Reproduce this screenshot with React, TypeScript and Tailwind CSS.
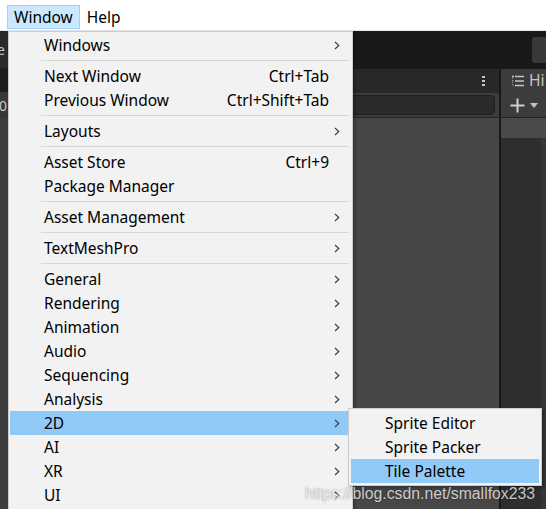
import React from "react";

type Item =
  | { kind: "sep" }
  | { kind: "item"; label: string; shortcut?: string; sub?: boolean; active?: boolean };

const sep: Item = { kind: "sep" };

const items: Item[] = [
  { kind: "item", label: "Windows", sub: true },
  sep,
  { kind: "item", label: "Next Window", shortcut: "Ctrl+Tab" },
  { kind: "item", label: "Previous Window", shortcut: "Ctrl+Shift+Tab" },
  sep,
  { kind: "item", label: "Layouts", sub: true },
  sep,
  { kind: "item", label: "Asset Store", shortcut: "Ctrl+9" },
  { kind: "item", label: "Package Manager" },
  sep,
  { kind: "item", label: "Asset Management", sub: true },
  sep,
  { kind: "item", label: "TextMeshPro", sub: true },
  sep,
  { kind: "item", label: "General", sub: true },
  { kind: "item", label: "Rendering", sub: true },
  { kind: "item", label: "Animation", sub: true },
  { kind: "item", label: "Audio", sub: true },
  { kind: "item", label: "Sequencing", sub: true },
  { kind: "item", label: "Analysis", sub: true },
  { kind: "item", label: "2D", sub: true, active: true },
  { kind: "item", label: "AI", sub: true },
  { kind: "item", label: "XR", sub: true },
  { kind: "item", label: "UI", sub: true },
];

const subItems = [
  { label: "Sprite Editor" },
  { label: "Sprite Packer" },
  { label: "Tile Palette", active: true },
];

function Chevron() {
  return (
    <svg width="6" height="9" viewBox="0 0 6 9" className="ml-[5px] -mt-[2px]">
      <path d="M1 1 L4.8 4.5 L1 8" fill="none" stroke="#3a3a3a" strokeWidth="1.1" />
    </svg>
  );
}

function MenuRow({ item }: { item: Item }) {
  if (item.kind === "sep") {
    return (
      <div className="h-[7px] flex items-center pl-[31px] pr-[2px]">
        <div className="h-px w-full bg-[#d7d7d7]" />
      </div>
    );
  }
  return (
    <div
      className={`h-[24px] flex items-center pl-[34px] pt-[2px] ${item.active ? "bg-[#91c9f7]" : ""}`}
    >
      <span className="flex-1">{item.label}</span>
      {item.shortcut && <span>{item.shortcut}</span>}
      <div className="w-[22px] flex items-center">{item.sub && <Chevron />}</div>
    </div>
  );
}

export default function App() {
  return (
    <div
      className="relative w-[546px] h-[509px] overflow-hidden flex flex-col text-[15.5px] text-black"
      style={{ fontFamily: '"Noto Sans", "Open Sans", sans-serif' }}
    >
      {/* menu bar */}
      <div className="h-[31px] shrink-0 bg-white flex items-end pl-[7px] pb-[1px] border-b border-[#e6e6e6]">
        <div className="h-[24px] px-[6px] pt-[2px] flex items-center bg-[#cce8ff] border border-[#99d1ff]">
          Window
        </div>
        <div className="h-[24px] px-[7px] pt-[2px] flex items-center">Help</div>
      </div>

      {/* editor behind the menu */}
      <div className="flex-1 flex min-h-0">
        <div className="w-[8px] shrink-0 flex flex-col text-[#c8c8c8] text-[14px]">
          <div className="h-[37px] bg-[#2a2a2a] flex items-center justify-end pr-[3px]">
            <span>e</span>
          </div>
          <div className="h-[24px] bg-[#1e1e1e]" />
          <div className="h-[26px] bg-[#383838] flex items-center justify-end pr-px">
            <span>0</span>
          </div>
          <div className="flex-1 bg-[#3c3c3c]" />
        </div>

        <div className="flex-1 min-w-0 flex flex-col">
          <div className="h-[38px] bg-[#191919] flex items-center justify-end">
            <div className="w-[14px] h-[26px] bg-[#383838] rounded-l-[3px]" />
          </div>
          <div className="flex-1 flex min-w-0">
            <div className="w-[491px] shrink-0 flex flex-col">
              <div className="h-[24px] bg-[#282828] flex items-center justify-end pr-[14px]">
                <div className="flex flex-col gap-[2px]">
                  <div className="w-[3px] h-[2px] bg-[#c4c4c4]" />
                  <div className="w-[3px] h-[2px] bg-[#c4c4c4]" />
                  <div className="w-[3px] h-[2px] bg-[#c4c4c4]" />
                </div>
              </div>
              <div className="h-[25px] bg-[#3c3c3c] flex items-center pl-[20px] pr-[4px] border-b border-[#232323]">
                <div className="flex-1 h-[20px] rounded-[4px] bg-[#2a2a2a] border border-[#1f1f1f]" />
              </div>
              <div className="flex-1 bg-[#474747] border-l-2 border-[#3a3a3a]" />
            </div>
            <div className="w-[2px] shrink-0 bg-[#191919]" />
            <div className="flex-1 min-w-0 flex flex-col text-[#c4c4c4]">
              <div className="h-[24px] bg-[#3c3c3c] flex items-center pl-[10px] gap-[4px] whitespace-nowrap">
                <svg width="14" height="12" viewBox="0 0 14 12" className="shrink-0">
                  <path d="M1 1.5 H3 M4 1.5 H13 M4 6 H13 M4 10.5 H13" stroke="#c4c4c4" strokeWidth="1.3" />
                  <path d="M1.5 3 V10.5 H3 M1.5 6 H3" stroke="#a0a0a0" strokeWidth="0.9" strokeDasharray="1 1" fill="none" />
                </svg>
                <span>Hi</span>
              </div>
              <div className="h-[24px] bg-[#3c3c3c] flex items-center pl-[9px] gap-[5px]">
                <svg width="15" height="15" viewBox="0 0 15 15" className="shrink-0">
                  <path d="M7.5 0.5 V14.5 M0.5 7.5 H14.5" stroke="#d0d0d0" strokeWidth="2" />
                </svg>
                <svg width="8" height="5" viewBox="0 0 8 5" className="shrink-0">
                  <path d="M0 0 H8 L4 5 Z" fill="#c4c4c4" />
                </svg>
              </div>
              <div className="h-px bg-[#232323]" />
              <div className="h-[20px] bg-[#4a4a4a]" />
              <div className="flex-1 flex">
                <div className="flex-1 bg-[#2e2e2e]" />
                <div className="w-[5px] bg-[#363636]" />
              </div>
            </div>
          </div>
        </div>
      </div>

      {/* Window menu */}
      <div className="absolute left-[8px] top-[31px] w-[345px] h-[490px] bg-[#f2f2f2] border border-[#cccccc] pt-px px-px shadow-[2px_2px_3px_rgba(0,0,0,0.25)]">
        {items.map((it, i) => (
          <MenuRow key={i} item={it} />
        ))}
      </div>

      {/* 2D submenu */}
      <div className="absolute left-[348px] top-[408px] w-[194px] bg-[#f2f2f2] border border-[#cccccc] p-[2px] shadow-[2px_2px_3px_rgba(0,0,0,0.3)]">
        {subItems.map((s) => (
          <div
            key={s.label}
            className={`h-[24px] flex items-center pl-[34px] pt-[2px] ${s.active ? "bg-[#91c9f7]" : ""}`}
          >
            {s.label}
          </div>
        ))}
      </div>

      {/* watermark */}
      <div
        className="absolute left-[305px] top-[482px] text-[15.8px] text-white/75 whitespace-nowrap"
        style={{ fontFamily: '"Liberation Sans", Arial, sans-serif', textShadow: "0 0 2px rgba(0,0,0,0.45)" }}
      >
        https://blog.csdn.net/smallfox233
      </div>
    </div>
  );
}
